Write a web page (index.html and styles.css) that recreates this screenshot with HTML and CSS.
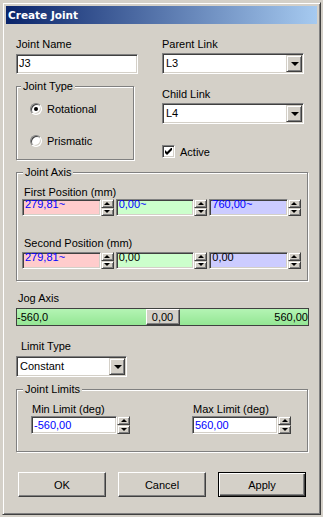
FILE: index.html
```html
<!DOCTYPE html>
<html lang="en">
<head>
    <meta charset="UTF-8">
    <title>Create Joint</title>
    <link rel="stylesheet" href="styles.css">
</head>
<body>
    <div class="window">
        <div class="titlebar">Create Joint</div>

        <div class="dialog">
            <div class="top-grid">
                <div class="col">
                    <div class="label">Joint Name</div>
                    <div class="edit name-edit">J3</div>

                    <fieldset class="group type-group">
                        <legend>Joint Type</legend>
                        <div class="radio-row first"><span class="radio checked"></span>Rotational</div>
                        <div class="radio-row second"><span class="radio"></span>Prismatic</div>
                    </fieldset>
                </div>

                <div class="col">
                    <div class="label">Parent Link</div>
                    <div class="combo">
                        <span class="combo-text">L3</span>
                        <span class="combo-btn"><span class="arrow-down"></span></span>
                    </div>

                    <div class="label child-label">Child Link</div>
                    <div class="combo">
                        <span class="combo-text">L4</span>
                        <span class="combo-btn"><span class="arrow-down"></span></span>
                    </div>

                    <div class="check-row">
                        <span class="checkbox">
                            <svg width="7" height="7" viewBox="0 0 7 7"><path d="M0 2 L2 4 L7 -1 L7 2 L2 7 L0 5 Z" fill="#000"/></svg>
                        </span>
                        Active
                    </div>
                </div>
            </div>

            <fieldset class="group axis-group">
                <legend>Joint Axis</legend>
                <div class="group-body axis-body">
                    <div class="label sub-label">First Position (mm)</div>
                    <div class="xyz-row">
                        <div class="spin"><div class="edit xyz x blue-text">279,81~</div><div class="spinner"><span class="spin-btn up"></span><span class="spin-btn down"></span></div></div>
                        <div class="spin"><div class="edit xyz y blue-text">0,00~</div><div class="spinner"><span class="spin-btn up"></span><span class="spin-btn down"></span></div></div>
                        <div class="spin"><div class="edit xyz z blue-text">760,00~</div><div class="spinner"><span class="spin-btn up"></span><span class="spin-btn down"></span></div></div>
                    </div>

                    <div class="label sub-label second-label">Second Position (mm)</div>
                    <div class="xyz-row">
                        <div class="spin"><div class="edit xyz x blue-text">279,81~</div><div class="spinner"><span class="spin-btn up"></span><span class="spin-btn down"></span></div></div>
                        <div class="spin"><div class="edit xyz y">0,00</div><div class="spinner"><span class="spin-btn up"></span><span class="spin-btn down"></span></div></div>
                        <div class="spin"><div class="edit xyz z">0,00</div><div class="spinner"><span class="spin-btn up"></span><span class="spin-btn down"></span></div></div>
                    </div>
                </div>
            </fieldset>

            <div class="label jog-label">Jog Axis</div>
            <div class="slider">
                <span class="slider-min">-560,0</span>
                <span class="thumb">0,00</span>
                <span class="slider-max">560,00</span>
            </div>

            <div class="label limit-label">Limit Type</div>
            <div class="combo limit-combo">
                <span class="combo-text">Constant</span>
                <span class="combo-btn"><span class="arrow-down"></span></span>
            </div>

            <fieldset class="group limits-group">
                <legend>Joint Limits</legend>
                <div class="group-body limits-body">
                    <div class="limit-col">
                        <div class="label">Min Limit (deg)</div>
                        <div class="spin"><div class="edit limit-edit blue-text">-560,00</div><div class="spinner"><span class="spin-btn up"></span><span class="spin-btn down"></span></div></div>
                    </div>
                    <div class="limit-col">
                        <div class="label">Max Limit (deg)</div>
                        <div class="spin"><div class="edit limit-edit blue-text">560,00</div><div class="spinner"><span class="spin-btn up"></span><span class="spin-btn down"></span></div></div>
                    </div>
                </div>
            </fieldset>

            <div class="buttons">
                <button class="btn">OK</button>
                <button class="btn">Cancel</button>
                <button class="btn default">Apply</button>
            </div>
        </div>
    </div>
</body>
</html>
```

FILE: styles.css
```css
* {
    box-sizing: border-box;
}

body {
    margin: 0;
    background: #d4d0c8;
    font-family: "Liberation Sans", Arial, sans-serif;
    font-size: 11px;
    color: #000;
}

.window {
    margin: 2px 0 0 2px;
    width: 319px;
    height: 513px;
    padding: 3px;
    border: 1px solid;
    border-color: #d4d0c8 #404040 #404040 #d4d0c8;
    box-shadow: inset 1px 1px #fff, inset -1px -1px #808080;
}

.titlebar {
    height: 18px;
    line-height: 18px;
    padding-left: 2px;
    background: linear-gradient(to right, #0a246a, #a6caf0);
    color: #fff;
    font-family: "DejaVu Sans", sans-serif;
    font-weight: bold;
    font-size: 10.5px;
}

.dialog {
    padding: 14px 0 0 10px;
}

.label {
    height: 13px;
    line-height: 13px;
    white-space: nowrap;
}

/* top section */

.top-grid {
    display: grid;
    grid-template-columns: 122px 142px;
    column-gap: 24px;
}

.edit {
    border: 1px solid;
    border-color: #808080 #fff #fff #808080;
    box-shadow: inset 1px 1px #404040, inset -1px -1px #d4d0c8;
    background: #fff;
    padding-left: 2px;
    white-space: nowrap;
    overflow: hidden;
}

.name-edit {
    margin-top: 3px;
    height: 20px;
    line-height: 16px;
}

.combo {
    display: flex;
    justify-content: space-between;
    height: 21px;
    margin-top: 2px;
    padding: 1px;
    border: 1px solid;
    border-color: #808080 #fff #fff #808080;
    box-shadow: inset 1px 1px #404040, inset -1px -1px #d4d0c8;
    background: #fff;
}

.combo-text {
    padding-left: 2px;
    line-height: 16px;
}

.combo-btn {
    display: flex;
    align-items: center;
    justify-content: center;
    width: 16px;
    height: 17px;
    background: #d4d0c8;
    border: 1px solid;
    border-color: #d4d0c8 #404040 #404040 #d4d0c8;
    box-shadow: inset 1px 1px #fff, inset -1px -1px #808080;
}

.arrow-down {
    width: 0;
    height: 0;
    border-left: 4px solid transparent;
    border-right: 4px solid transparent;
    border-top: 4px solid #000;
    margin-left: 1px;
}

.child-label {
    margin-top: 14px;
}

.check-row {
    display: flex;
    align-items: center;
    gap: 5px;
    margin-top: 21px;
    height: 13px;
}

.checkbox {
    display: flex;
    align-items: center;
    justify-content: center;
    width: 13px;
    height: 13px;
    border: 1px solid;
    border-color: #808080 #fff #fff #808080;
    box-shadow: inset 1px 1px #404040, inset -1px -1px #d4d0c8;
    background: #fff;
}

/* group boxes */

.group {
    margin: 0;
    padding: 0;
    min-width: 0;
    border: 1px solid #808080;
    box-shadow: inset 1px 1px #fff, 1px 1px #fff;
}

.group legend {
    padding: 0 2px;
    margin-left: 6px;
    line-height: 13px;
    background: #d4d0c8;
}

.type-group {
    width: 118px;
    margin-top: 6px;
    padding-bottom: 10px;
}

.type-group legend {
    margin-left: 4px;
}

.radio-row {
    display: flex;
    align-items: center;
    height: 16px;
}

.radio-row.first {
    margin-top: 8px;
}

.radio-row.second {
    margin-top: 16px;
}

.radio {
    position: relative;
    width: 12px;
    height: 12px;
    margin: 0 5px 0 13px;
    border-radius: 50%;
    border: 1px solid;
    border-color: #808080 #fff #fff #808080;
    box-shadow: inset 1px 1px #404040, inset -1px -1px #d4d0c8;
    background: #fff;
}

.radio.checked::after {
    content: "";
    position: absolute;
    left: 3px;
    top: 3px;
    width: 4px;
    height: 4px;
    border-radius: 50%;
    background: #000;
}

.axis-group {
    width: 292px;
    margin-top: 6px;
}

.axis-body {
    padding: 7px 6px 11px 5px;
}

.sub-label {
    margin-left: 2px;
}

.second-label {
    margin-top: 21px;
}

.xyz-row {
    display: grid;
    grid-template-columns: repeat(3, 1fr);
    gap: 2px;
}

.second-label + .xyz-row {
    margin-top: 2px;
}

.spin {
    display: flex;
}

.spin .edit {
    flex: 1;
    min-width: 0;
}

.xyz {
    height: 17px;
    line-height: 9px;
}

.xyz.x {
    background: #ffcccc;
}

.xyz.y {
    background: #ccffcc;
}

.xyz.z {
    background: #ccccff;
}

.blue-text {
    color: #0000ff;
}

.spinner {
    display: flex;
    flex-direction: column;
    width: 13px;
}

.spin-btn {
    flex: 1;
    display: flex;
    align-items: center;
    justify-content: center;
    background: #d4d0c8;
    border: 1px solid;
    border-color: #d4d0c8 #404040 #404040 #d4d0c8;
    box-shadow: inset 1px 1px #fff, inset -1px -1px #808080;
}

.spin-btn::after {
    content: "";
    width: 0;
    height: 0;
    border-left: 3px solid transparent;
    border-right: 3px solid transparent;
}

.spin-btn.up::after {
    border-bottom: 3px solid #000;
}

.spin-btn.down::after {
    border-top: 3px solid #000;
}

/* jog axis */

.jog-label {
    margin: 11px 0 0 2px;
}

.slider {
    display: grid;
    grid-template-columns: 1fr auto 1fr;
    align-items: center;
    width: 293px;
    height: 18px;
    margin-top: 3px;
    border: 1px solid #404040;
    background: linear-gradient(#b4f4b4, #94e694);
    line-height: 14px;
}

.slider-max {
    text-align: right;
}

.thumb {
    width: 34px;
    height: 16px;
    text-align: center;
    line-height: 14px;
    background: #d4d0c8;
    border: 1px solid;
    border-color: #fff #404040 #404040 #fff;
    box-shadow: inset -1px -1px #808080;
}

.limit-label {
    margin: 14px 0 0 5px;
}

.limit-combo {
    width: 111px;
    margin-top: 3px;
}

/* joint limits */

.limits-group {
    width: 292px;
    margin-top: 6px;
}

.limits-body {
    display: grid;
    grid-template-columns: 99px 99px;
    column-gap: 62px;
    padding: 7px 0 17px 14px;
}

.limit-col .label {
    margin-left: 1px;
}

.limit-edit {
    height: 18px;
    line-height: 16px;
}

/* buttons */

.buttons {
    display: flex;
    gap: 12px;
    margin: 20px 0 0 2px;
}

.btn {
    width: 88px;
    height: 25px;
    padding: 0;
    font-family: "Liberation Sans", Arial, sans-serif;
    font-size: 11px;
    color: #000;
    background: #d4d0c8;
    border: 1px solid;
    border-color: #fff #404040 #404040 #fff;
    box-shadow: inset -1px -1px #808080, inset 1px 1px #d4d0c8;
}

.btn.default {
    border: 1px solid #000;
    box-shadow: inset 1px 1px #fff, inset -1px -1px #404040, inset -2px -2px #808080;
}
```
